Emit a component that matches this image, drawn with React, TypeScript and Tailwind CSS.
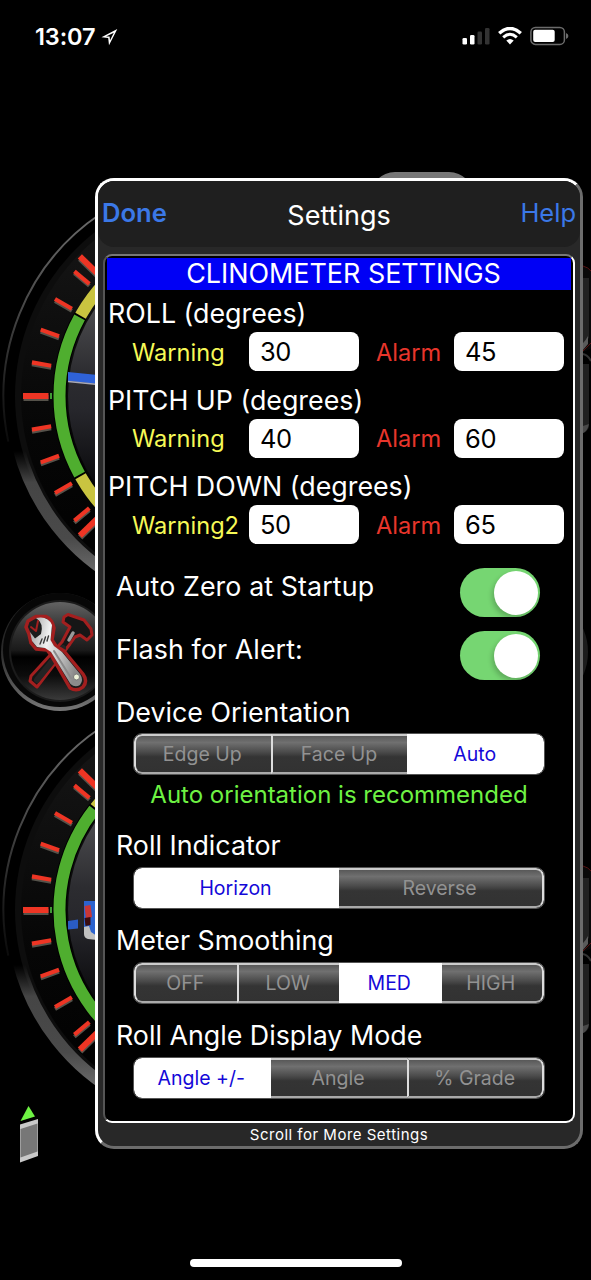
import type { ReactNode } from 'react'

const TICKS = [-44.3, -40, -30, -20, -10, 0, 10, 20, 30, 40, 44.3]

type GaugeProps = {
  id: string
  cy: number
  greenFrom: number
  greenTo: number
  children?: ReactNode
}

const CX = 223

// point on a circle around the gauge centre, 0 degrees = left, positive = down
const point = (cy: number, r: number, deg: number) => {
  const a = (deg * Math.PI) / 180
  return `${(CX - r * Math.cos(a)).toFixed(2)} ${(cy + r * Math.sin(a)).toFixed(2)}`
}

const arc = (cy: number, r: number, from: number, to: number) =>
  `M${point(cy, r, from)}A${r} ${r} 0 0 0 ${point(cy, r, to)}`

function Gauge({ id, cy, greenFrom, greenTo, children }: GaugeProps) {
  return (
    <g>
      <defs>
        <linearGradient id={`${id}-rim`} gradientUnits="userSpaceOnUse" x1="0" y1={cy - 180} x2="0" y2={cy + 180}>
          <stop offset="0" stopColor="#6a6a6a" />
          <stop offset="0.25" stopColor="#484848" />
          <stop offset="0.5" stopColor="#1a1a1a" />
          <stop offset="0.62" stopColor="#0c0c0c" />
          <stop offset="1" stopColor="#0c0c0c" />
        </linearGradient>
        <linearGradient id={`${id}-lip`} gradientUnits="userSpaceOnUse" x1="0" y1={cy + 55} x2="0" y2={cy + 180}>
          <stop offset="0" stopColor="#3c3c3c" stopOpacity="0" />
          <stop offset="0.25" stopColor="#454545" />
          <stop offset="0.7" stopColor="#4a4a4a" />
          <stop offset="1" stopColor="#6e6e6e" />
        </linearGradient>
        <linearGradient id={`${id}-face`} x1="0" y1="0" x2="0" y2="1">
          <stop offset="0" stopColor="#181818" />
          <stop offset="0.6" stopColor="#060606" />
          <stop offset="1" stopColor="#000" />
        </linearGradient>
        <linearGradient id={`${id}-disc`} x1="0" y1="0" x2="0" y2="1">
          <stop offset="0.1" stopColor="#5c5c5e" />
          <stop offset="0.43" stopColor="#2c2c30" />
          <stop offset="0.55" stopColor="#26262b" />
          <stop offset="0.8" stopColor="#08080a" />
        </linearGradient>
      </defs>
      <path d={arc(cy, 219.5, -56, 12)} fill="none" stroke={`url(#${id}-rim)`} strokeWidth="2" />
      <circle cx={CX} cy={cy} r={208} fill="#0d0d0d" />
      <circle cx={CX} cy={cy} r={202} fill={`url(#${id}-face)`} />
      <path d={arc(cy, 211, 14, 62)} fill="none" stroke={`url(#${id}-lip)`} strokeWidth="12" />
      <circle cx={CX} cy={cy} r={155} fill={`url(#${id}-disc)`} />
      <path d={arc(cy, 163.5, -60, 60)} fill="none" stroke="#c9c440" strokeWidth="12" />
      <path d={arc(cy, 163.5, greenFrom - 0.7, greenTo + 0.7)} fill="none" stroke="#000" strokeWidth="14" />
      <path d={arc(cy, 163.5, greenFrom, greenTo)} fill="none" stroke="#4fae2f" strokeWidth="12" />
      {TICKS.map((deg) => {
        const major = deg === 0 || Math.abs(deg) > 42
        return (
          <g key={deg}>
            <path
              d={`M${point(cy + 2, 174.5, deg)}L${point(cy + 2, major ? 199.5 : 194, deg)}`}
              stroke="#55524a"
              strokeWidth={major ? 6 : 4}
            />
            <path
              d={`M${point(cy, 174.5, deg)}L${point(cy, major ? 200 : 194, deg)}`}
              stroke="#ee3524"
              strokeWidth={major ? 6 : 4.2}
            />
          </g>
        )
      })}
      <path d={`M50 ${cy - 3}h2v6h-2z`} fill="#3f9a35" />
      {children}
    </g>
  )
}

function Backdrop() {
  return (
    <svg className="absolute inset-0" width="591" height="1280" viewBox="0 0 591 1280">
      <defs>
        <linearGradient id="btn-rim" x1="0" y1="0" x2="0" y2="1">
          <stop offset="0" stopColor="#1c1c1c" />
          <stop offset="0.5" stopColor="#2a2a2a" />
          <stop offset="1" stopColor="#777" />
        </linearGradient>
        <linearGradient id="btn-face" x1="0" y1="0" x2="0" y2="1">
          <stop offset="0" stopColor="#636363" />
          <stop offset="0.25" stopColor="#363636" />
          <stop offset="0.49" stopColor="#1a1a1a" />
          <stop offset="0.56" stopColor="#000" />
          <stop offset="0.75" stopColor="#0c0c0c" />
          <stop offset="1" stopColor="#3a3a3a" />
        </linearGradient>
        <linearGradient id="steel" x1="0" y1="0" x2="1" y2="0.3">
          <stop offset="0" stopColor="#9b9b9b" />
          <stop offset="0.4" stopColor="#f2f2f2" />
          <stop offset="1" stopColor="#8c8c8c" />
        </linearGradient>
      </defs>

      <Gauge id="roll" cy={396} greenFrom={-28.7} greenTo={28.7}>
        <path d="M68 372l30 3v9l-30 -3z" fill="#2f62d8" />
        <path d="M68 381.500l30 3" stroke="#a9a9b5" strokeWidth="1.500" />
      </Gauge>

      <Gauge id="pitch" cy={910} greenFrom={-38} greenTo={60}>
        <path d="M68 921l10 -1.500v9l-10 1z" fill="#2a5cc4" />
        <path d="M84 901h12v34h-6l-6 -6z" fill="#2c63cf" />
        <path d="M84.500 906l6 -1l1.500 12l-6 2z" fill="#c93636" />
        <path d="M84.500 918l6 -1v8l-5 1z" fill="#3a0c10" />
        <path d="M84 927l5 -1l2 6l6 4v4l-9 -1q-4 -1 -4 -5z" fill="#c0c0c0" />
      </Gauge>

      {/* Tools button */}
      <circle cx="60" cy="652" r="59" fill="url(#btn-rim)" />
      <circle cx="60" cy="650" r="57" fill="#070707" />
      <circle cx="60" cy="651" r="51" fill="#1b1b1b" />
      <circle cx="60" cy="651" r="49" fill="url(#btn-face)" />
      <g strokeLinejoin="round" strokeLinecap="round">
        <path
          d="M64 617L68 614.500L84 620L91 629L92 635L87 640L80 635L75 637L70 644L37 687L30 681L31 676L62 642L70 627L63 622Z"
          fill="#161616"
          stroke="#a31f1f"
          strokeWidth="3"
        />
        <path d="M69 640L73 633" stroke="#9a9a9a" strokeWidth="3.500" />
        <path d="M37 680L63 648" stroke="#242424" strokeWidth="6" />
        <path
          d="M36 616.500L46 616.500Q52 619 54 628L52 640L56 646L64 651L83 674Q88 681 83 687Q77 692 70 688L51 655L47 650L36 649L31 643L29 634L26 627L28 621L36 616.500Z"
          fill="#1c1c1c"
          stroke="#a31f1f"
          strokeWidth="3.500"
        />
        <path
          d="M36 618Q48 615.500 52 625L50.500 640L54 646L62 652L80 674Q84 680 80 685Q75 688 70.500 684L51 652L45 648L37 647L32 641L30 632L35 638.500L41 634Q44 623 36 618Z"
          fill="url(#steel)"
        />
        <path d="M38 621L36 631L31 627" fill="none" stroke="#a31f1f" strokeWidth="2" />
        <path d="M54 651L71 678" stroke="#8a8a8a" strokeWidth="2" />
        <path d="M40 644l2 -5M43.500 643l2 -6M47 641l1.500 -5" stroke="#3a3a3a" strokeWidth="1.400" />
      </g>
      <circle cx="76.500" cy="677" r="3" fill="#eef3d8" stroke="#777" />

      {/* Device tilt marker */}
      <path d="M28.500 1106L20.500 1121L35 1116.500Z" fill="#6ef243" />
      <path d="M20 1124.500L38 1119V1156L20 1162.500Z" fill="#c9c9c9" />
      <path d="M20.500 1129L37.500 1123.500V1151.500L20.500 1157.500Z" fill="#777" />

      {/* Controls peeking out from behind the panel */}
      <rect x="370" y="172" width="104" height="50" rx="25" fill="#777" />
      <circle cx="529" cy="652" r="59" fill="#1c1c1c" />
      {[266, 866].map((y) => (
        <g key={y}>
          <path d={`M583 ${y}q5 1 9 6v76l-9 4z`} fill="#090909" />
          <path d={`M583 ${y}q5 1 9 6`} fill="none" stroke="#571111" />
          <path d={`M583 ${y + 12}h6v60l-6 5z`} fill="#222" />
          <path d={`M583 ${y + 85}q4 -4 8 -8`} fill="none" stroke="#571111" />
          <path d={`M583 ${y + 77}q3 -3 5 -7v8l-5 6z`} fill="#5a5a5a" />
          <path d={`M583 ${y + 88}q5 1 8 7`} fill="none" stroke="#333" strokeWidth="2" />
          <path d={`M583 ${y + 98}h6v63q-2 5 -6 6z`} fill="#202020" />
          <path d={`M589 ${y + 158}q-2 8 -6 9v-7z`} fill="#4a4a4a" />
        </g>
      ))}
    </svg>
  )
}

function StatusBar() {
  return (
    <div className="relative flex h-[72px] items-center justify-between pl-[35px] pr-[22px]">
      <div className="flex items-center gap-[6px]">
        <span className="mt-[1px] text-[23.5px] leading-none font-semibold tracking-[-0.1px]">13:07</span>
        <svg width="17" height="18" viewBox="0 0 17 18" className="mt-[2px]">
          <path
            d="M16.300 1L0.500 9.300L7.200 10L8 17.300ZM12.800 4.700L9 12.300L8.600 8.500L5 8.600Z"
            fill="#fff"
            fillRule="evenodd"
          />
        </svg>
      </div>
      <div className="flex items-center gap-[8px]">
        <svg width="28" height="18" viewBox="0 0 28 18" fill="#fff">
          <rect x="0.500" y="11" width="4.500" height="6.500" rx="1.300" />
          <rect x="8" y="8" width="4.500" height="9.500" rx="1.300" />
          <rect x="15.500" y="4.500" width="4.500" height="13" rx="1.300" fill="#333" />
          <rect x="23" y="1" width="4.500" height="16.500" rx="1.300" fill="#333" />
        </svg>
        <svg width="24" height="18" viewBox="0 0 24 18" fill="none" stroke="#fff">
          <path d="M1.200 6.300Q12 -3.400 22.800 6.300" strokeWidth="3.400" />
          <path d="M5.200 10.300Q12 4.300 18.800 10.300" strokeWidth="3" />
          <path d="M12 17.500L8.300 13.600Q12 10.600 15.700 13.600Z" fill="#fff" stroke="none" />
        </svg>
        <svg width="39" height="20" viewBox="0 0 39 20">
          <rect x="0.900" y="1.400" width="33.500" height="17" rx="4.500" fill="none" stroke="#6b6b6b" strokeWidth="1.500" />
          <rect x="3.200" y="3.800" width="21.500" height="12.200" rx="2" fill="#fff" />
          <path d="M36 7v6q2.400 -1 2.400 -3t-2.400 -3z" fill="#6b6b6b" />
        </svg>
      </div>
    </div>
  )
}

type LimitRowProps = {
  title: string
  warningLabel: string
  warning: string
  alarm: string
}

function LimitRow({ title, warningLabel, warning, alarm }: LimitRowProps) {
  return (
    <div className="h-[86.7px]">
      <h3 className="ml-[3px] h-[39px] text-[26.8px] leading-[41px]">{title}</h3>
      <div className="flex h-[39px] items-center pl-[27px] text-[23.6px] leading-[41px]">
        <span className="w-[117px] pt-[1px] text-[#f6f956]">{warningLabel}</span>
        <div className="h-[39px] w-[110px] rounded-[8px] bg-white pl-[11px] text-[25.5px] leading-[40px] tracking-[-0.4px] text-black">{warning}</div>
        <span className="w-[95px] pt-[1px] pl-[17px] text-[#e8352b]">Alarm</span>
        <div className="h-[39px] w-[110px] rounded-[8px] bg-white pl-[11px] text-[25.5px] leading-[40px] tracking-[-0.4px] text-black">{alarm}</div>
      </div>
    </div>
  )
}

function ToggleRow({ label }: { label: string }) {
  return (
    <div className="flex h-[63px] items-center justify-between pl-[11px] pr-[33px]">
      <span className="-mt-[12px] text-[26.8px] tracking-[0.1px]">{label}</span>
      <div className="flex h-[49px] w-[80px] items-center justify-end rounded-full bg-[#76d672] pr-[2px]">
        <div className="h-[44px] w-[44px] rounded-full bg-white shadow-[-2px_3px_5px_rgba(0,0,0,0.2)]" />
      </div>
    </div>
  )
}

function Segments({ options, selected }: { options: string[]; selected: number }) {
  return (
    <div className="ml-[28px] grid h-[42px] w-[412px] auto-cols-fr grid-flow-col overflow-hidden rounded-[9px] border border-[#555] bg-black">
      {options.map((option, i) => {
        const first = i === 0
        const last = i === options.length - 1
        const divided = !first && i !== selected && i - 1 !== selected
        return (
          <div
            key={option}
            className={`flex min-w-0 items-center justify-center pt-[2px] pr-[2px] text-[19.5px] whitespace-nowrap ${
              i === selected
                ? 'bg-white text-[#1408d8]'
                : 'border-t-2 border-b-2 border-t-[#ccc] border-r-[#ddd] border-b-[#aaa] border-l-[#ddd] bg-[linear-gradient(#585858_0%,#707070_18%,#4a4a4a_45%,#343434_58%,#323232_100%)] text-[#929292]'
            } ${first ? 'rounded-l-[8px]' : ''} ${last ? 'rounded-r-[8px]' : ''} ${
              i !== selected && (first || divided) ? 'border-l-2' : ''
            } ${i !== selected && last ? 'border-r-2' : ''}`}
          >
            {option}
          </div>
        )
      })}
    </div>
  )
}

export default function App() {
  return (
    <div className="relative h-[1280px] w-[591px] overflow-hidden bg-black font-['Inter',sans-serif] text-white">
      <Backdrop />
      <StatusBar />

      {/* Settings panel */}
      <div className="relative mt-[106px] ml-[95px] flex h-[971px] w-[488px] flex-col rounded-[19px] border-[3px] border-t-white border-r-[#6c6c6c] border-b-[#6c6c6c] border-l-white bg-[#282828]">
        <div className="flex h-[66px] items-center justify-between rounded-[16px] bg-[#1f1f1f] px-[4px]">
          <span className="-mt-[2px] w-[100px] text-[25.6px] font-semibold text-[#3b78e7]">Done</span>
          <span className="mt-[4px] text-[27px]">Settings</span>
          <span className="-mt-[2px] w-[100px] text-right text-[25.5px] text-[#3b78e7]">Help</span>
        </div>

        <div className="mt-[7px] ml-[5px] h-[869px] w-[472px] rounded-[9px] border-[2px] border-t-[#777] border-r-white border-b-white border-l-[#555] bg-black">
          <div className="mx-[2px] mt-[2px] h-[32px] bg-[#0000f5] pl-[9px] text-center text-[26.9px] leading-[31px]">CLINOMETER SETTINGS</div>
          <div className="mt-[3px]">
            <LimitRow title="ROLL (degrees)" warningLabel="Warning" warning="30" alarm="45" />
            <LimitRow title="PITCH UP (degrees)" warningLabel="Warning" warning="40" alarm="60" />
            <LimitRow title="PITCH DOWN (degrees)" warningLabel="Warning2" warning="50" alarm="65" />
          </div>

          <div className="mt-[8px]">
            <ToggleRow label="Auto Zero at Startup" />
            <ToggleRow label="Flash for Alert:" />
          </div>

          <h3 className="mt-[4px] ml-[11px] h-[42px] text-[26.8px] leading-[42px]">Device Orientation</h3>
          <Segments options={['Edge Up', 'Face Up', 'Auto']} selected={2} />
          <p className="mt-[4px] h-[30px] text-center text-[24px] leading-[31px] text-[#6ef243]">Auto orientation is recommended</p>

          <h3 className="mt-[16px] ml-[11px] h-[42px] text-[26.8px] leading-[41px]">Roll Indicator</h3>
          <Segments options={['Horizon', 'Reverse']} selected={0} />

          <h3 className="mt-[11px] ml-[11px] h-[42px] text-[26.8px] leading-[41px]">Meter Smoothing</h3>
          <Segments options={['OFF', 'LOW', 'MED', 'HIGH']} selected={2} />

          <h3 className="mt-[11px] ml-[11px] h-[42px] text-[26.8px] leading-[41px]">Roll Angle Display Mode</h3>
          <Segments options={['Angle +/-', 'Angle', '% Grade']} selected={0} />
        </div>

        <div className="text-center text-[15px] leading-[23px] tracking-[0.5px]">Scroll for More Settings</div>
      </div>

      {/* Home indicator */}
      <div className="relative mx-auto mt-[110px] h-[8px] w-[212px] rounded-full bg-white" />
    </div>
  )
}
